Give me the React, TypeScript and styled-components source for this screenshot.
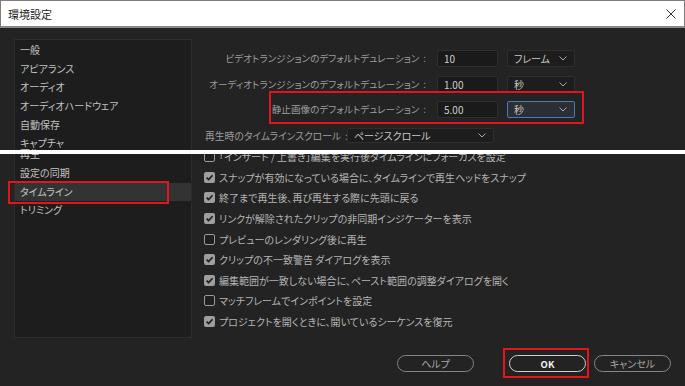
import React from 'react';
import styled, { createGlobalStyle } from 'styled-components';

const GlobalStyle = createGlobalStyle`
  html, body {
    margin: 0;
    padding: 0;
    background: #232323;
  }
  body {
    font-family: "Noto Sans CJK JP", "Noto Sans", sans-serif;
    font-feature-settings: "palt";
  }
`;

const categories = [
  '一般',
  'アピアランス',
  'オーディオ',
  'オーディオハードウェア',
  '自動保存',
  'キャプチャ',
  '再生',
  '設定の同期',
  'タイムライン',
  'トリミング',
];

const durations = [
  { label: 'ビデオトランジションのデフォルトデュレーション', value: '10', unit: 'フレーム' },
  { label: 'オーディオトランジションのデフォルトデュレーション', value: '1.00', unit: '秒' },
  { label: '静止画像のデフォルトデュレーション', value: '5.00', unit: '秒', focused: true },
];

const options = [
  { text: '「インサート / 上書き」編集を実行後タイムラインにフォーカスを設定', checked: false },
  { text: 'スナップが有効になっている場合に、タイムラインで再生ヘッドをスナップ', checked: true },
  { text: '終了まで再生後、再び再生する際に先頭に戻る', checked: true },
  { text: 'リンクが解除されたクリップの非同期インジケーターを表示', checked: true },
  { text: 'プレビューのレンダリング後に再生', checked: false },
  { text: 'クリップの不一致警告 ダイアログを表示', checked: true },
  { text: '編集範囲が一致しない場合に、ペースト範囲の調整ダイアログを開く', checked: true },
  { text: 'マッチフレームでインポイントを設定', checked: false },
  { text: 'プロジェクトを開くときに、開いているシーケンスを復元', checked: true },
];

const Chevron = () => (
  <svg width="8" height="5" viewBox="0 0 8 5">
    <polyline points="0.5,0.5 4,4 7.5,0.5" fill="none" stroke="#a8a8a8" strokeWidth="1" />
  </svg>
);

const App: React.FC = () => {
  return (
    <>
      <GlobalStyle />
      <Window>
        <TitleBar>
          <Title>環境設定</Title>
          <CloseButton>
            <svg width="10" height="10" viewBox="0 0 10 10">
              <path d="M0.5 0.5 L9.5 9.5 M9.5 0.5 L0.5 9.5" stroke="#333" strokeWidth="1" />
            </svg>
          </CloseButton>
        </TitleBar>

        <Body>
          <Main>
            <SidePanel>
              {categories.map((name) => (
                <Category
                  key={name}
                  $selected={name === 'タイムライン'}
                  $shifted={name === '再生'}
                >
                  {name}
                  {name === 'タイムライン' && <Highlight $box="-2px auto -3px -7px" $width="157px" />}
                </Category>
              ))}
            </SidePanel>

            <Content>
              <Durations>
                {durations.map((d) => (
                  <DurationRow key={d.label}>
                    <FieldLabel>
                      {d.label}
                      <Colon>:</Colon>
                    </FieldLabel>
                    <NumberField>{d.value}</NumberField>
                    <Dropdown $focused={d.focused}>
                      <span>{d.unit}</span>
                      <Chevron />
                    </Dropdown>
                    {d.focused && <Highlight $box="-10px -9px -6px 65px" />}
                  </DurationRow>
                ))}
                <ScrollRow>
                  <span>
                    再生時のタイムラインスクロール
                    <Colon>:</Colon>
                  </span>
                  <Dropdown $wide>
                    <span>ページスクロール</span>
                    <Chevron />
                  </Dropdown>
                </ScrollRow>
              </Durations>

              <Options>
                {options.map((o) => (
                  <OptionRow key={o.text}>
                    <CheckBox $checked={o.checked}>
                      {o.checked && (
                        <svg width="11" height="11" viewBox="0 0 11 11">
                          <path d="M2.6 5.6 L4.6 7.6 L8.6 3.2" fill="none" stroke="#1e1e1e" strokeWidth="1.7" />
                        </svg>
                      )}
                    </CheckBox>
                    <span>{o.text}</span>
                  </OptionRow>
                ))}
              </Options>
            </Content>
          </Main>

          <Footer>
            <PillButton>ヘルプ</PillButton>
            <PrimaryWrap>
              <PillButton $primary>OK</PillButton>
              <Highlight $box="-7px -3px -6px -6px" />
            </PrimaryWrap>
            <PillButton>キャンセル</PillButton>
          </Footer>
        </Body>

        <Seam />
      </Window>
    </>
  );
};

const Window = styled.div`
  position: relative;
  width: 685px;
  height: 386px;
  display: flex;
  flex-direction: column;
  background: #232323;
  overflow: hidden;
`;

const TitleBar = styled.div`
  height: 25px;
  flex: none;
  display: flex;
  align-items: center;
  justify-content: space-between;
  background: #fff;
  border: 1px solid #7d7d7d;
  border-bottom: 2px solid #8a8a8a;
  padding: 0 7px 0 7px;
`;

const Title = styled.div`
  font-size: 11px;
  color: #1a1a1a;
`;

const CloseButton = styled.div`
  width: 10px;
  height: 10px;
  display: flex;
  margin-right: 1px;
  margin-top: 1px;
`;

const Body = styled.div`
  flex: 1;
  display: flex;
  flex-direction: column;
  padding: 11px 14px 14px 14px;
`;

const Main = styled.div`
  display: flex;
  height: 299px;
`;

const SidePanel = styled.div`
  width: 178px;
  flex: none;
  background: #1d1d1d;
  border: 1px solid #2c2c2c;
  box-sizing: border-box;
  padding-top: 1px;
  display: flex;
  flex-direction: column;
`;

const Category = styled.div<{ $selected?: boolean; $shifted?: boolean }>`
  position: relative;
  height: 18.7px;
  line-height: 18.7px;
  padding-left: 5px;
  font-size: 10px;
  color: #c2c2c2;
  background: ${(p) => (p.$selected ? '#333333' : 'transparent')};
  margin-top: ${(p) => (p.$shifted ? '-8px' : '0')};
`;

const Highlight = styled.div<{ $box: string; $width?: string }>`
  position: absolute;
  inset: ${(p) => p.$box};
  ${(p) => (p.$width ? `width: ${p.$width};` : '')}
  border: 2px solid #e3141b;
  pointer-events: none;
`;

const Content = styled.div`
  flex: 1;
  padding-left: 12px;
  display: flex;
  flex-direction: column;
`;

const Durations = styled.div`
  display: flex;
  flex-direction: column;
  align-items: flex-start;
  gap: 8.7px;
  margin-top: 11px;
`;

const DurationRow = styled.div`
  position: relative;
  height: 17px;
  display: grid;
  grid-template-columns: 224px 61px 68px;
  column-gap: 9px;
  align-items: stretch;
`;

const FieldLabel = styled.div`
  font-size: 9.6px;
  color: #9c9c9c;
  text-align: right;
  line-height: 17px;
  white-space: nowrap;
  padding-right: 2px;
`;

const Colon = styled.span`
  margin-left: 4px;
`;

const NumberField = styled.div`
  background: #1a1a1a;
  border: 1px solid #2e2e2e;
  border-radius: 2px;
  font-size: 10px;
  color: #cfcfcf;
  line-height: 15px;
  padding-left: 6px;
`;

const Dropdown = styled.div<{ $focused?: boolean; $wide?: boolean }>`
  display: flex;
  align-items: center;
  justify-content: space-between;
  box-sizing: border-box;
  width: ${(p) => (p.$wide ? '147px' : 'auto')};
  height: ${(p) => (p.$wide ? '15px' : 'auto')};
  background: ${(p) => (p.$focused ? '#2b2e34' : '#1d1d1d')};
  border: 1px solid ${(p) => (p.$focused ? '#4a79b6' : '#2e2e2e')};
  border-radius: 2px;
  padding: 0 7px 0 6px;
  font-size: 10px;
  color: #c8c8c8;
`;

const ScrollRow = styled.div`
  height: 17px;
  display: grid;
  grid-template-columns: 142px auto;
  align-items: center;
  font-size: 9.8px;
  color: #9c9c9c;
  padding-left: 1px;
  white-space: nowrap;
`;

const Options = styled.div`
  display: flex;
  flex-direction: column;
  margin-top: 2.4px;
`;

const OptionRow = styled.div`
  height: 20.6px;
  display: flex;
  align-items: center;
  gap: 4px;
  font-size: 10px;
  color: #b4b4b4;
  white-space: nowrap;
`;

const CheckBox = styled.div<{ $checked?: boolean }>`
  width: 11px;
  height: 11px;
  box-sizing: border-box;
  border-radius: 2px;
  display: flex;
  background: ${(p) => (p.$checked ? '#9e9e9e' : '#1f1f1f')};
  border: ${(p) => (p.$checked ? 'none' : '1.5px solid #9a9a9a')};
`;

const Footer = styled.div`
  margin-top: auto;
  display: flex;
  justify-content: flex-end;
  align-items: center;
  gap: 8px;
`;

const PrimaryWrap = styled.div`
  position: relative;
  display: flex;
  margin-left: 27px;
`;

const PillButton = styled.div<{ $primary?: boolean }>`
  width: 77px;
  height: 17px;
  box-sizing: border-box;
  display: flex;
  align-items: center;
  justify-content: center;
  border-radius: 9px;
  border: ${(p) => (p.$primary ? '1.5px solid #cfcfcf' : '1px solid #858585')};
  font-size: ${(p) => (p.$primary ? '9.5px' : '10px')};
  font-weight: ${(p) => (p.$primary ? 700 : 400)};
  color: ${(p) => (p.$primary ? '#f2f2f2' : '#a6a6a6')};
`;

const Seam = styled.div`
  position: absolute;
  left: 0;
  right: 0;
  top: 150px;
  height: 4px;
  background: #fff;
`;

export default App;
